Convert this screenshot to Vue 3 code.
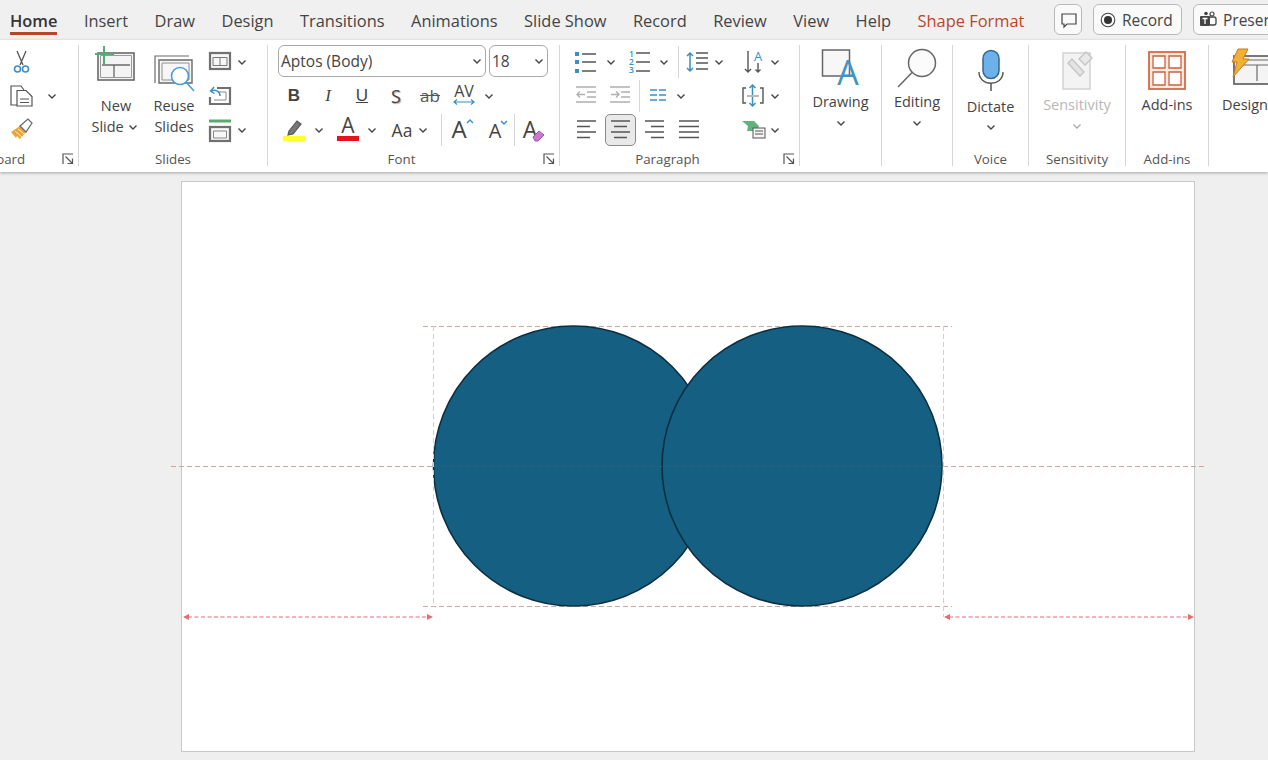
<template>
  <div class="app">
    <!-- tab strip -->
    <header class="tabbar">
      <nav class="tabs">
        <span v-for="t in tabs" :key="t" class="tab" :class="{ active: t === 'Home', accent: t === 'Shape Format' }">{{ t }}</span>
      </nav>
      <div class="actions">
        <button class="act act-comment">
          <svg width="18" height="18" viewBox="0 0 18 18" fill="none" stroke="#444" stroke-width="1.2"><path d="M2 3h14v10H7l-3 3v-3H2z" /></svg>
        </button>
        <button class="act act-record">
          <svg width="16" height="16" viewBox="0 0 16 16"><circle cx="8" cy="8" r="6.8" fill="none" stroke="#444" stroke-width="1.1" /><circle cx="8" cy="8" r="4" fill="#333" /></svg>
          Record
        </button>
        <button class="act act-present">
          <svg width="18" height="18" viewBox="0 0 18 18"><rect x="1" y="5" width="10" height="10" rx="1" fill="#444" /><rect x="10" y="6" width="7" height="8" rx="2" fill="none" stroke="#444" stroke-width="1.3" /><circle cx="13" cy="3" r="2" fill="none" stroke="#444" stroke-width="1.2" /><circle cx="7" cy="2.5" r="1.8" fill="#444" /><path d="M3.5 7.5h5M6 7.5v5.5" stroke="#fff" stroke-width="1.3" /></svg>
          Present
        </button>
      </div>
    </header>

    <!-- ribbon -->
    <section class="ribbon">
      <div class="group g-clip">
        <div class="clip-rows">
          <div class="row r-clip">
            <svg width="44" height="34" viewBox="0 0 44 34" fill="none">
              <path d="M17 6l6 14M26 6l-6 14" stroke="#555" stroke-width="1.3" />
              <circle cx="17.5" cy="24" r="3" stroke="#3a8fc5" stroke-width="1.6" />
              <circle cx="25.5" cy="24" r="3" stroke="#3a8fc5" stroke-width="1.6" />
            </svg>
          </div>
          <div class="row r-clip">
            <svg width="44" height="34" viewBox="0 0 44 34" fill="none" stroke="#555" stroke-width="1.2">
              <path d="M17 26h-6V7h10l3 4" />
              <path d="M17 11.500h9l6 6V27H17z" fill="#fff" />
              <path d="M20 20h9M20 23.500h9" />
            </svg>
            <Chev />
          </div>
          <div class="row r-clip">
            <svg width="44" height="34" viewBox="0 0 44 34">
              <path d="M11 19l9-6 6 6-6 7-3-3-1 2z" fill="#eba43a" />
              <path d="M15 18l7 6M18 16l6 5" stroke="#fff" stroke-width="0.8" />
              <path d="M20 13l8-7 4 4-6 9z" fill="#fff" stroke="#666" stroke-width="1.2" />
            </svg>
          </div>
        </div>
        <div class="label pad-launch">Clipboard</div>
        <Launcher class="launcher" />
      </div>

      <div class="group g-slides">
        <div class="slides-body">
          <div class="big b-new">
            <svg width="42" height="50" viewBox="0 0 42 50">
              <rect x="4" y="8" width="36" height="27" fill="#f4f4f4" stroke="#6a6a6a" stroke-width="1.6" />
              <path d="M6.5 10.500h31v22h-31z" fill="none" stroke="#9a9a9a" />
              <path d="M8 20h28M20 20v12" stroke="#6a6a6a" stroke-width="1.3" />
              <path d="M10 1v18M1 9h19" stroke="#4fae76" stroke-width="2" />
            </svg>
            <span class="big-text">New</span>
            <span class="big-text">Slide <Chev class="inline-chev" /></span>
          </div>
          <div class="big b-reuse">
            <svg width="46" height="50" viewBox="0 0 46 50" fill="none">
              <path d="M4 38V11h34" stroke="#6a6a6a" stroke-width="1.2" />
              <path d="M8 15h33v23H8z" fill="#f6f6f6" stroke="#6a6a6a" stroke-width="1.4" />
              <path d="M11 18h27v17H11z" stroke="#8e8e8e" />
              <circle cx="29" cy="31" r="8.5" fill="#fff" stroke="#4a9fd0" stroke-width="1.6" />
              <path d="M35 37l8 9" stroke="#4a9fd0" stroke-width="1.6" />
            </svg>
            <span class="big-text">Reuse</span>
            <span class="big-text">Slides</span>
          </div>
          <div class="slide-tools">
            <div class="row r-small">
              <svg width="38" height="34" viewBox="0 0 38 34" fill="none">
                <rect x="14" y="8" width="20" height="16" fill="#f6f6f6" stroke="#707070" stroke-width="2.200" />
                <path d="M17 12.500h14v8H17zM24 12.500v8" stroke="#777" />
              </svg>
              <Chev />
            </div>
            <div class="row r-small">
              <svg width="38" height="34" viewBox="0 0 38 34" fill="none">
                <path d="M21 9h13v16H14v-7" stroke="#707070" stroke-width="2.200" />
                <path d="M22 13h8v8H18" stroke="#888" />
                <path d="M24 17c0-5-5-7-9-5M18 8l-3.500 4 4 2.500" stroke="#3a8fc5" stroke-width="1.400" />
              </svg>
            </div>
            <div class="row r-small">
              <svg width="38" height="34" viewBox="0 0 38 34" fill="none">
                <path d="M13 8h22" stroke="#5aa86c" stroke-width="3" />
                <rect x="14" y="14" width="20" height="14" fill="#f6f6f6" stroke="#707070" stroke-width="2.200" />
                <path d="M17.500 18h13v7h-13z" stroke="#888" />
              </svg>
              <Chev />
            </div>
          </div>
        </div>
        <div class="label">Slides</div>
      </div>

      <div class="group g-font">
        <div class="combos">
          <div class="combo c-font"><span>Aptos (Body)</span><Chev /></div>
          <div class="combo c-size"><span>18</span><Chev /></div>
        </div>
        <div class="row r-format">
          <span class="fmt f-b">B</span>
          <span class="fmt f-i">I</span>
          <span class="fmt f-u">U</span>
          <span class="fmt f-s">S</span>
          <span class="fmt f-ab">ab</span>
          <svg width="34" height="34" viewBox="0 0 34 34">
            <text x="17" y="18" class="svg-txt" font-size="16" text-anchor="middle" fill="#444">AV</text>
            <path d="M7 23h20M10 20.500L7 23l3 2.500M24 20.500l3 2.500-3 2.500" fill="none" stroke="#3a8fc5" stroke-width="1.2" />
          </svg>
          <Chev />
        </div>
        <div class="row r-color">
          <svg width="34" height="34" viewBox="0 0 34 34">
            <path d="M12 18l8-10 4 3-8 10-5 1z" fill="#777" stroke="#555" stroke-width="1.2" />
            <rect x="6" y="23" width="22" height="5" fill="#ffff2e" />
          </svg>
          <Chev />
          <svg width="37" height="34" viewBox="0 0 37 34">
            <text x="21" y="20" class="svg-txt" font-size="21" text-anchor="middle" fill="#444">A</text>
            <rect x="10" y="23" width="22" height="5" fill="#e2151b" />
          </svg>
          <Chev />
          <span class="aa">Aa</span>
          <Chev />
          <i class="vsep" />
          <svg width="28" height="34" viewBox="0 0 28 34">
            <text x="8" y="25" class="svg-txt" font-size="24" text-anchor="middle" fill="#444">A</text>
            <path d="M16 10l3-3 3 3" fill="none" stroke="#3a8fc5" stroke-width="1.4" />
          </svg>
          <svg width="30" height="34" viewBox="0 0 30 34">
            <text x="16" y="25" class="svg-txt" font-size="20" text-anchor="middle" fill="#444">A</text>
            <path d="M22 8l3 3 3-3" fill="none" stroke="#3a8fc5" stroke-width="1.4" />
          </svg>
          <i class="vsep" />
          <svg width="30" height="34" viewBox="0 0 30 34">
            <text x="11" y="25" class="svg-txt" font-size="23" text-anchor="middle" fill="#444">A</text>
            <path d="M14 24l6-6 5 4-6 6h-3z" fill="#c77ad0" stroke="#a84db8" />
          </svg>
        </div>
        <div class="label pad-launch">Font</div>
        <Launcher class="launcher" />
      </div>

      <div class="group g-para">
        <div class="row r-para1">
          <svg width="38" height="34" viewBox="0 0 38 34">
            <path d="M10 7h4v4h-4zM10 15h4v4h-4zM10 24h4v4h-4z" fill="#3a8fc5" />
            <path d="M17 9h14M17 17h14M17 26h14" stroke="#555" stroke-width="1.4" />
          </svg>
          <Chev />
          <svg width="37" height="34" viewBox="0 0 37 34">
            <text class="num"><tspan x="10" y="12">1</tspan><tspan x="10" y="20">2</tspan><tspan x="10" y="28">3</tspan></text>
            <path d="M17 8h14M17 17h14M17 26h14" stroke="#555" stroke-width="1.4" />
          </svg>
          <Chev />
          <i class="vsep" />
          <svg width="27" height="34" viewBox="0 0 27 34" fill="none">
            <path d="M6 8v18M3 11l3-3 3 3M3 23l3 3 3-3" stroke="#3a8fc5" stroke-width="1.5" />
            <path d="M12 8h12M12 13h12M12 18h12M12 24h12" stroke="#555" stroke-width="1.4" />
          </svg>
          <Chev />
          <svg width="40" height="34" viewBox="0 0 40 34" fill="none">
            <path d="M21 6v21M18 24l3 3 3-3" stroke="#555" stroke-width="1.4" />
            <text x="31" y="16" class="svg-txt" font-size="13" text-anchor="middle" fill="#3a8fc5">A</text>
            <path d="M31 18v9M28.500 24.500l2.500 2.500 2.500-2.500" stroke="#555" stroke-width="1.4" />
          </svg>
          <Chev />
        </div>
        <div class="row r-para2">
          <svg width="38" height="34" viewBox="0 0 38 34" fill="none">
            <path d="M11 8h20M22 13h9M22 18h9M11 23h20" stroke="#b0b0b0" stroke-width="1.5" />
            <path d="M20 15.500h-8M15 12.500l-3 3 3 3" stroke="#b0b0b0" stroke-width="1.3" />
          </svg>
          <svg width="34" height="34" viewBox="0 0 34 34" fill="none">
            <path d="M7 8h20M18 13h9M18 18h9M7 23h20" stroke="#b0b0b0" stroke-width="1.5" />
            <path d="M8 15.500h8M13 12.500l3 3-3 3" stroke="#b0b0b0" stroke-width="1.3" />
          </svg>
          <i class="vsep" />
          <svg width="32" height="34" viewBox="0 0 32 34" fill="none" stroke="#3a8fc5" stroke-width="1.5">
            <path d="M9 11h7M9 16h7M9 21h7M18 11h7M18 16h7M18 21h7" />
          </svg>
          <Chev />
          <svg width="78" height="34" viewBox="0 0 78 34" fill="none">
            <path d="M57 9h-3v15h3M71 9h3v15h-3" stroke="#555" stroke-width="1.4" />
            <path d="M58 17h12" stroke="#777" />
            <path d="M63.500 6v10M60.500 9l3-3 3 3M63.500 18v9M60.500 24l3 3 3-3" stroke="#3a8fc5" stroke-width="1.5" />
          </svg>
          <Chev />
        </div>
        <div class="row r-para3">
          <svg width="38" height="34" viewBox="0 0 38 34">
            <path d="M12 8h19M12 13.500h13M12 19h19M12 24.500h13" stroke="#555" stroke-width="1.4" />
          </svg>
          <span class="selected">
            <svg width="31" height="32" viewBox="0 0 31 32">
              <path d="M6 7h19M9 12.500h13M6 18h19M9 23.500h13" stroke="#555" stroke-width="1.4" />
            </svg>
          </span>
          <svg width="35" height="34" viewBox="0 0 35 34">
            <path d="M8 8h19M14 13.500h13M8 19h19M14 24.500h13" stroke="#555" stroke-width="1.4" />
          </svg>
          <svg width="34" height="34" viewBox="0 0 34 34">
            <path d="M7 8h20M7 13.500h20M7 19h20M7 24.500h20" stroke="#555" stroke-width="1.4" />
          </svg>
          <svg width="61" height="34" viewBox="0 0 61 34">
            <path d="M36 8h12l5 5-2 5H41l1-5z" fill="#62b27e" />
            <rect x="47" y="15" width="12" height="10" fill="#f5f5f5" stroke="#555" />
            <path d="M49 18h8M49 21h8" stroke="#555" />
          </svg>
          <Chev />
        </div>
        <div class="label pad-launch">Paragraph</div>
        <Launcher class="launcher" />
      </div>

      <div class="group g-draw">
        <div class="big">
          <svg class="ic-draw" width="50" height="48" viewBox="0 0 50 48">
            <rect x="6.500" y="5" width="27" height="26" fill="#f7f7f7" stroke="#666" stroke-width="1.5" />
            <text x="32" y="40" class="svg-txt" font-size="34" text-anchor="middle" fill="#3f93c5">A</text>
          </svg>
          <span class="big-text">Drawing</span>
          <Chev class="down" />
        </div>
      </div>

      <div class="group g-edit">
        <div class="big">
          <svg class="ic-draw" width="50" height="48" viewBox="0 0 50 48" fill="none">
            <circle cx="30" cy="18" r="13.500" fill="#fbfbfb" stroke="#666" stroke-width="1.5" />
            <path d="M20 27.500L6 42" stroke="#666" stroke-width="1.5" />
          </svg>
          <span class="big-text">Editing</span>
          <Chev class="down" />
        </div>
      </div>

      <div class="group g-voice">
        <div class="big">
          <svg class="ic-mic" width="30" height="53" viewBox="0 0 30 53" fill="none">
            <rect x="7" y="5.500" width="16" height="28" rx="8" fill="#6db1ea" stroke="#34658f" stroke-width="1.5" />
            <path d="M3 27c0 15 24 15 24 0" stroke="#555" stroke-width="1.4" />
            <path d="M15 38v8" stroke="#555" stroke-width="1.5" />
          </svg>
          <span class="big-text">Dictate</span>
          <Chev class="down d-voice" />
        </div>
        <div class="label">Voice</div>
      </div>

      <div class="group g-sens">
        <div class="big">
          <svg class="ic-sens" width="36" height="51" viewBox="0 0 36 51" fill="none">
            <rect x="4" y="8" width="27" height="36" fill="#f3f3f3" stroke="#d2d2d2" stroke-width="1.500" />
            <path d="M9 18l12 13 4-4-12-13z" fill="#e4e4e4" stroke="#c4c4c4" stroke-width="1.300" />
            <path d="M20 14l7-7 6 6-7 7z" fill="#e8e8e8" stroke="#c4c4c4" stroke-width="1.300" />
          </svg>
          <span class="big-text muted">Sensitivity</span>
          <Chev class="down faded" />
        </div>
        <div class="label">Sensitivity</div>
      </div>

      <div class="group g-addins">
        <div class="big">
          <svg class="ic-sens" width="38" height="51" viewBox="0 0 38 51" fill="none">
            <rect x="1" y="7" width="36" height="37" fill="#fbe9e2" stroke="#d56a44" stroke-width="1.800" />
            <path d="M5 11h12v12H5zM21 11h12v12H21zM5 27h12v13H5zM21 27h12v13H21z" fill="#fff" stroke="#c8623c" stroke-width="1.300" />
          </svg>
          <span class="big-text">Add-ins</span>
        </div>
        <div class="label">Add-ins</div>
      </div>

      <div class="group g-design">
        <div class="big designer">
          <svg class="ic-sens" width="46" height="51" viewBox="0 0 46 51" fill="none">
            <rect x="4" y="11" width="42" height="28" fill="#f4f4f4" stroke="#6a6a6a" stroke-width="1.800" />
            <path d="M8 15h38M8 20h38M27 20v16" stroke="#6a6a6a" stroke-width="1.200" />
            <path d="M8 4h10l-5 10h6L3 32l4-15H2z" fill="#f2b134" stroke="#c77b1c" />
          </svg>
          <span class="big-text">Designer</span>
        </div>
      </div>
    </section>

    <!-- slide area -->
    <main class="workspace">
      <div class="slide" />
      <svg class="canvas" width="1268" height="588" viewBox="0 172 1268 588" fill="none">
        <g stroke="#cda69c" stroke-width="1" stroke-dasharray="5 3">
          <path d="M423 326.500h529M423 606.500h529M171 466.500h262M943 466.500h262" />
        </g>
        <circle cx="573.500" cy="466" r="140" fill="#156082" stroke="#0c2f40" stroke-width="1.600" />
        <circle cx="802" cy="466" r="140" fill="#156082" stroke="#0c2f40" stroke-width="1.600" />
        <path d="M433 466.500h510" stroke="#2f5f72" stroke-width="1" stroke-dasharray="5 3" />
        <g stroke="#d8cccc" stroke-width="1" stroke-dasharray="5 3">
          <path d="M433.500 326v281M943.500 326v291" />
        </g>
        <g stroke="#e26d73" stroke-width="1" stroke-dasharray="4 2.500">
          <path d="M188 617h240M949 617h239" />
        </g>
        <g fill="#e26d73">
          <path d="M183 617l6-3v6zM433 617l-6-3v6zM944 617l6-3v6zM1194 617l-6-3v6z" />
        </g>
      </svg>
    </main>
  </div>
</template>

<script setup>
import { h } from 'vue'

const tabs = ['Home', 'Insert', 'Draw', 'Design', 'Transitions', 'Animations', 'Slide Show', 'Record', 'Review', 'View', 'Help', 'Shape Format']

// small dropdown arrow used all over the ribbon
const Chev = () =>
  h('svg', { class: 'chev', width: 16, height: 16, viewBox: '0 0 16 16', fill: 'none' }, [
    h('path', { d: 'M4.5 6.500L8 10l3.500-3.500', stroke: '#444', 'stroke-width': 1.4 })
  ])

const Launcher = () =>
  h('svg', { width: 12, height: 12, viewBox: '0 0 12 12', fill: 'none', stroke: '#555' }, [
    h('path', { d: 'M1 11V1h10', 'stroke-width': 1.2 }),
    h('path', { d: 'M3.500 3.500l7 7M5.500 10.500h5v-5', 'stroke-width': 1.2 })
  ])
</script>

<style scoped>
.app {
  width: 1268px;
  height: 760px;
  overflow: hidden;
  display: flex;
  flex-direction: column;
  background: #efefef;
  font-family: "Open Sans", "Liberation Sans", sans-serif;
  color: #444;
}

/* tab strip */
.tabbar {
  height: 40px;
  flex: none;
  display: flex;
  background: #f0f0f0;
}
.tabs {
  width: 1054px;
  flex: none;
  display: flex;
  gap: 26.500px;
  padding-left: 10px;
  box-sizing: border-box;
}
.tab {
  height: 32px;
  line-height: 42px;
  padding-bottom: 3px;
  font-size: 16.400px;
  white-space: nowrap;
}
.tab.active {
  font-weight: 600;
  color: #333;
  border-bottom: 3px solid #b7472a;
  padding-bottom: 0;
}
.tab.accent {
  color: #b7472a;
}
.actions {
  display: flex;
  flex: none;
  gap: 11px;
  padding-top: 4px;
}
.act {
  height: 31px;
  box-sizing: border-box;
  border: 1px solid #b9b9b9;
  border-radius: 6px;
  background: #fafafa;
  display: flex;
  align-items: center;
  gap: 6px;
  padding: 0 0 0 5px;
  font: 15.500px "Open Sans", sans-serif;
  color: #444;
  white-space: nowrap;
}
.act-comment {
  width: 28px;
}
.act-record {
  width: 89px;
  padding-left: 6px;
}
.act-present {
  width: 110px;
}

/* ribbon */
.ribbon {
  height: 132px;
  flex: none;
  box-sizing: border-box;
  padding-top: 5px;
  display: flex;
  background: #fff;
  box-shadow: 0 1px 3px rgba(0, 0, 0, 0.3);
  position: relative;
  z-index: 1;
}
.group {
  position: relative;
  flex: none;
  height: 121px;
  box-sizing: border-box;
  border-right: 1px solid #d6d6d6;
  display: flex;
  flex-direction: column;
}
.g-clip { width: 143px; margin-left: -64px; }
.g-slides { width: 189px; }
.g-font { width: 292px; padding-left: 9px; }
.g-para { width: 240px; padding-left: 5px; }
.g-draw { width: 82px; }
.g-edit { width: 71px; }
.g-voice { width: 76px; }
.g-sens { width: 97px; }
.g-addins { width: 83px; }
.g-design { width: 100px; border-right: 0; }

.label {
  margin-top: auto;
  height: 14px;
  line-height: 14px;
  text-align: center;
  font-size: 13.300px;
  color: #555;
  white-space: nowrap;
}
.pad-launch {
  padding-right: 24px;
}
.g-font .label { margin-left: -9px; }
.g-para .label { margin-left: -5px; }
.launcher {
  position: absolute;
  right: 4px;
  bottom: 1px;
}

.row {
  display: grid;
  height: 34px;
  align-items: center;
  justify-items: center;
}
.row svg {
  overflow: visible;
}
.clip-rows {
  margin-left: 64px;
}
.r-clip { grid-template-columns: 44px 16px; }
.r-small { grid-template-columns: 38px 16px; }
.r-format { grid-template-columns: repeat(6, 34px) 16px; }
.r-color { grid-template-columns: 34px 16px 37px 16px 35px 16px 20px 28px 30px 10px 30px; }
.r-para1 { grid-template-columns: 38px 16px 37px 16px 12px 27px 16px 40px 16px; }
.r-para2 { grid-template-columns: 38px 34px 4px 32px 16px 78px 16px; }
.r-para3 { grid-template-columns: 38px 34px 35px 34px 61px 16px; }

.vsep {
  display: block;
  width: 1px;
  height: 32px;
  background: #d6d6d6;
}
.selected {
  display: block;
  width: 31px;
  height: 32px;
  box-sizing: border-box;
  background: #e9e9e9;
  border: 1px solid #8a8a8a;
  border-radius: 5px;
}
.selected svg {
  display: block;
  margin: -1px;
}

/* large buttons */
.big {
  display: flex;
  flex-direction: column;
  align-items: center;
}
.big svg {
  flex: none;
  overflow: visible;
}
.big-text {
  display: block;
  font-size: 14.500px;
  line-height: 21px;
  white-space: nowrap;
  color: #444;
}
.muted {
  color: #b8b8b8;
}
.ic-draw + .big-text,
.ic-mic + .big-text,
.ic-sens + .big-text {
  line-height: 18px;
}
.down {
  margin-top: 4px;
}
.d-voice {
  margin-top: 3px;
}
.faded {
  opacity: 0.45;
}
.inline-chev {
  vertical-align: -3px;
  margin-left: -3px;
}
.designer {
  align-items: flex-start;
  padding-left: 13px;
}
.designer svg {
  margin-left: 8px;
}

.slides-body {
  display: flex;
}
.b-new { width: 74px; }
.b-reuse { width: 42px; }
.b-new svg { margin-left: -3px; }
.slide-tools { margin-left: 1px; }

/* font controls */
.combos {
  display: flex;
  gap: 3px;
  height: 34px;
  padding-left: 1px;
}
.combo {
  height: 32px;
  box-sizing: border-box;
  border: 1px solid #a9a9a9;
  border-radius: 6px;
  display: flex;
  align-items: center;
  justify-content: space-between;
  padding: 0 0 0 2px;
  font-size: 15.500px;
}
.c-font { width: 208px; }
.c-size { width: 59px; }
.fmt {
  font-size: 17px;
  line-height: 34px;
}
.f-b { font-weight: 700; font-family: "Liberation Sans", sans-serif; }
.f-i { font-style: italic; font-family: "Liberation Serif", serif; }
.f-u { text-decoration: underline; font-family: "Liberation Sans", sans-serif; }
.f-s { text-shadow: 1px 1px 1px #aaa; font-family: "Open Sans", sans-serif; font-size: 18px; }
.f-ab { text-decoration: line-through; font-family: "Open Sans", sans-serif; color: #555; }
.aa {
  font-size: 17.500px;
  padding-left: 9px;
}
.svg-txt {
  font-family: "Open Sans", "Liberation Sans", sans-serif;
}
.num {
  font: 600 8.500px "Open Sans", sans-serif;
  fill: #3a8fc5;
}

/* slide */
.workspace {
  position: relative;
  flex: 1;
  padding: 9px 0 0 181px;
}
.slide {
  width: 1014px;
  height: 571px;
  box-sizing: border-box;
  background: #fff;
  border: 1px solid #c8c8c8;
}
.canvas {
  position: absolute;
  left: 0;
  top: 0;
}
</style>

<style>
html, body {
  margin: 0;
  overflow: hidden;
}
</style>
